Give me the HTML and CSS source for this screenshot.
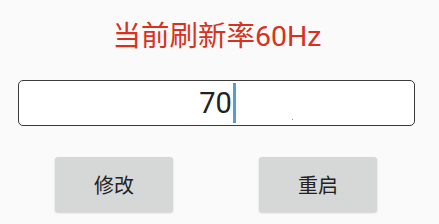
FILE: index.html
```html
<!DOCTYPE html>
<html>
<head>
<meta charset="utf-8">
<link rel="stylesheet" href="styles.css">
</head>
<body>
<div class="page">
  <h1 class="title">当前刷新率60Hz</h1>
  <div class="field">
    <span class="value">70</span><span class="caret"></span>
    <span class="dot"></span>
  </div>
  <div class="actions">
    <button class="btn">修改</button>
    <button class="btn">重启</button>
  </div>
</div>
</body>
</html>
```
FILE: styles.css
```css
html, body {
  margin: 0;
  padding: 0;
  background: #fafafa;
}
.page {
  width: 439px;
  height: 224px;
  font-family: Roboto, "Noto Sans CJK SC", sans-serif;
  display: flex;
  flex-direction: column;
}
.title {
  margin: 0;
  padding-top: 20px;
  padding-right: 5px;
  font-size: 28.5px;
  line-height: 34px;
  font-weight: 400;
  color: #d8321e;
  text-align: center;
}
.field {
  position: relative;
  margin: 26px 0 0 18px;
  width: 397px;
  height: 46px;
  box-sizing: border-box;
  border: 1.5px solid #3a3a3a;
  border-radius: 5px;
  background: #fff;
  display: flex;
  align-items: center;
  justify-content: center;
}
.value {
  font-size: 29px;
  color: #222;
  line-height: 40px;
  margin-left: 2px;
}
.caret {
  width: 3px;
  height: 40px;
  background: #5b9ad6;
  margin-left: 1px;
}
.dot {
  position: absolute;
  left: 273px;
  top: 38px;
  width: 1px;
  height: 1px;
  background: #d86a8a;
}
.actions {
  display: flex;
  gap: 86px;
  margin-top: 31px;
  padding-left: 55px;
}
.btn {
  width: 118px;
  height: 55px;
  border: none;
  border-radius: 3px;
  background: #d6d7d7;
  box-shadow: 0 1px 2px rgba(0,0,0,0.18);
  font-family: Roboto, "Noto Sans CJK SC", sans-serif;
  font-size: 20px;
  color: #222;
  padding: 0;
}
```
